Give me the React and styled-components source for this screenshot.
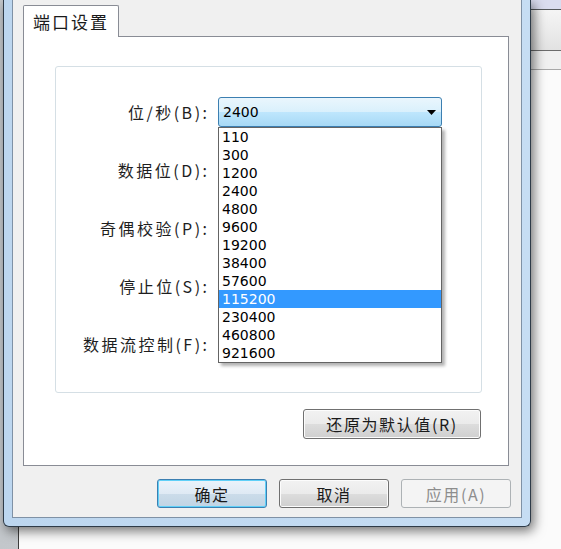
import React from 'react';
import styled, { createGlobalStyle } from 'styled-components';

const CJK = `"Noto Sans CJK SC", "Liberation Sans", sans-serif`;
const NUM = `"DejaVu Sans", "Liberation Sans", sans-serif`;

const GlobalStyle = createGlobalStyle`
  html, body { margin: 0; padding: 0; }
  body { width: 561px; height: 549px; overflow: hidden; background: #d6d8da; }
  * { box-sizing: border-box; }
`;

const Desktop = styled.div`
  position: relative;
  width: 561px;
  height: 549px;
  overflow: hidden;
  background: linear-gradient(90deg, #c3c7cb, #dadcde);
`;

const BackWindow = styled.div`
  position: absolute;
  left: 18px;
  top: 0;
  right: 0;
  bottom: 0;
  background: #fbfbfb;
  border-left: 1px solid #3d3d3d;
  display: flex;
  flex-direction: column;
`;

const BackBand = styled.div`
  height: ${(p) => p.$h}px;
  background: ${(p) => p.$bg};
  border-bottom: 1px solid ${(p) => p.$line};
`;

const Dialog = styled.div`
  position: absolute;
  left: 3px;
  top: 0;
  width: 528px;
  height: 527px;
  padding: 0 8px 8px;
  background: linear-gradient(90deg, #bcd6ef, #c6ddf3);
  border: 1px solid #2e3b48;
  border-top: none;
  border-radius: 0 0 6px 6px;
  box-shadow: 3px 4px 12px rgba(0, 0, 0, 0.55);
  display: flex;
`;

const Client = styled.div`
  flex: 1;
  height: 518px;
  background: #f0f0f0;
  border: 1px solid #7f91a5;
  border-top: none;
  padding: 5px 10px 0 10px;
  display: flex;
  flex-direction: column;
`;

const TabStrip = styled.div`
  display: flex;
  position: relative;
  z-index: 1;
`;

const Tab = styled.div`
  width: 96px;
  height: 32px;
  margin-bottom: -1px;
  background: #fff;
  border: 1px solid #898c95;
  border-bottom: none;
  border-radius: 2px 2px 0 0;
  font-family: ${CJK};
  font-size: 17px;
  letter-spacing: 2px;
  color: #1a1a1a;
  padding-left: 9px;
  line-height: 31px;
`;

const TabPanel = styled.div`
  height: 430px;
  margin-right: 2px;
  background: #fff;
  border: 1px solid #898c95;
  padding: 29px 0 0 31px;
  display: flex;
  flex-direction: column;
  align-items: flex-start;
`;

const GroupBox = styled.div`
  width: 427px;
  border: 1px solid #d5dfe5;
  border-radius: 3px;
  padding: 16px 0 19px 0;
  display: grid;
  grid-template-columns: 151px 224px;
  column-gap: 11px;
  grid-auto-rows: 58px;
  align-items: center;
`;

const Label = styled.div`
  text-align: right;
  font-family: ${CJK};
  font-size: 16px;
  letter-spacing: 2.5px;
  margin-right: -2.5px;
  color: #1e1e1e;
  white-space: nowrap;
`;

const Combo = styled.div`
  position: relative;
  z-index: ${(p) => (p.$open ? 2 : 0)};
  height: 30px;
  border: 1px solid ${(p) => (p.$open ? '#3c7fb1' : '#707070')};
  border-radius: 3px;
  background: ${(p) =>
    p.$open
      ? 'linear-gradient(#eaf6fd 0%, #d9f0fc 50%, #bee6fd 51%, #a7d9f5 100%)'
      : 'linear-gradient(#f2f2f2 0%, #ebebeb 50%, #dddddd 51%, #cfcfcf 100%)'};
  display: flex;
  align-items: center;
  justify-content: space-between;
  padding: 0 5px 0 4px;
  font-family: ${NUM};
  font-size: 14px;
  color: #000;
`;

const Arrow = styled.svg`
  width: 9px;
  height: 5px;
  display: block;
`;

const DropList = styled.ul`
  position: absolute;
  left: -1px;
  top: calc(100% + 1px);
  width: 224px;
  margin: 0;
  padding: 0;
  list-style: none;
  background: #fff;
  border: 1px solid #646464;
  box-shadow: 3px 3px 3px rgba(0, 0, 0, 0.3);
`;

const Item = styled.li`
  height: 18px;
  line-height: 18px;
  padding-left: 3px;
  font-family: ${NUM};
  font-size: 14px;
  color: ${(p) => (p.$selected ? '#fff' : '#000')};
  background: ${(p) => (p.$selected ? '#3399ff' : 'transparent')};
`;

const ResetRow = styled.div`
  width: 427px;
  display: flex;
  justify-content: flex-end;
  margin-top: 16px;
  padding-right: 1px;
`;

const Button = styled.button`
  width: ${(p) => p.$w}px;
  height: ${(p) => p.$h}px;
  padding: 0;
  border-radius: 3px;
  font-family: ${CJK};
  font-size: 16px;
  letter-spacing: 1.6px;
  line-height: 1;
  border: 1px solid ${(p) => (p.$default ? '#3c7fb1' : p.disabled ? '#adb2b5' : '#707070')};
  color: ${(p) => (p.disabled ? '#8d8d8d' : '#1a1a1a')};
  box-shadow: ${(p) =>
    p.$default ? 'inset 0 0 0 1px #5fd0f8' : p.disabled ? 'none' : 'inset 0 0 0 1px #fcfcfc'};
  background: ${(p) =>
    p.$default
      ? 'linear-gradient(#eaf3fb 0%, #dfeaf4 50%, #cbdcea 51%, #c0d4e4 100%)'
      : p.disabled
      ? '#f4f4f4'
      : 'linear-gradient(#f2f2f2 0%, #ebebeb 50%, #dddddd 51%, #cfcfcf 100%)'};
`;

const Footer = styled.div`
  display: flex;
  justify-content: flex-end;
  gap: 12px;
  margin-top: 13px;
`;

const rates = ['110', '300', '1200', '2400', '4800', '9600', '19200', '38400', '57600', '115200', '230400', '460800', '921600'];

const labels = ['位/秒(B):', '数据位(D):', '奇偶校验(P):', '停止位(S):', '数据流控制(F):'];

export default function App() {
  return (
    <>
      <GlobalStyle />
      <Desktop>
        <BackWindow>
          <BackBand $h={10} $bg="#dadcef" $line="#55585c" />
          <BackBand $h={41} $bg="linear-gradient(#f5f5f5, #e2e2e2)" $line="#6c6c6c" />
          <BackBand $h={19} $bg="#f0f0f0" $line="#a8a8a8" />
        </BackWindow>
        <Dialog>
          <Client>
            <TabStrip>
              <Tab>端口设置</Tab>
            </TabStrip>
            <TabPanel>
              <GroupBox>
                {labels.map((l, i) => (
                  <React.Fragment key={l}>
                    <Label>{l}</Label>
                    <Combo $open={i === 0}>
                      <span>{i === 0 ? '2400' : ''}</span>
                      <Arrow viewBox="0 0 9 5">
                        <polygon points="0,0 9,0 4.5,5" fill="#000" />
                      </Arrow>
                      {i === 0 && (
                        <DropList>
                          {rates.map((r) => (
                            <Item key={r} $selected={r === '115200'}>
                              {r}
                            </Item>
                          ))}
                        </DropList>
                      )}
                    </Combo>
                  </React.Fragment>
                ))}
              </GroupBox>
              <ResetRow>
                <Button $w={178} $h={30}>还原为默认值(R)</Button>
              </ResetRow>
            </TabPanel>
            <Footer>
              <Button $w={110} $h={29} $default>确定</Button>
              <Button $w={110} $h={29}>取消</Button>
              <Button $w={110} $h={29} disabled>应用(A)</Button>
            </Footer>
          </Client>
        </Dialog>
      </Desktop>
    </>
  );
}
